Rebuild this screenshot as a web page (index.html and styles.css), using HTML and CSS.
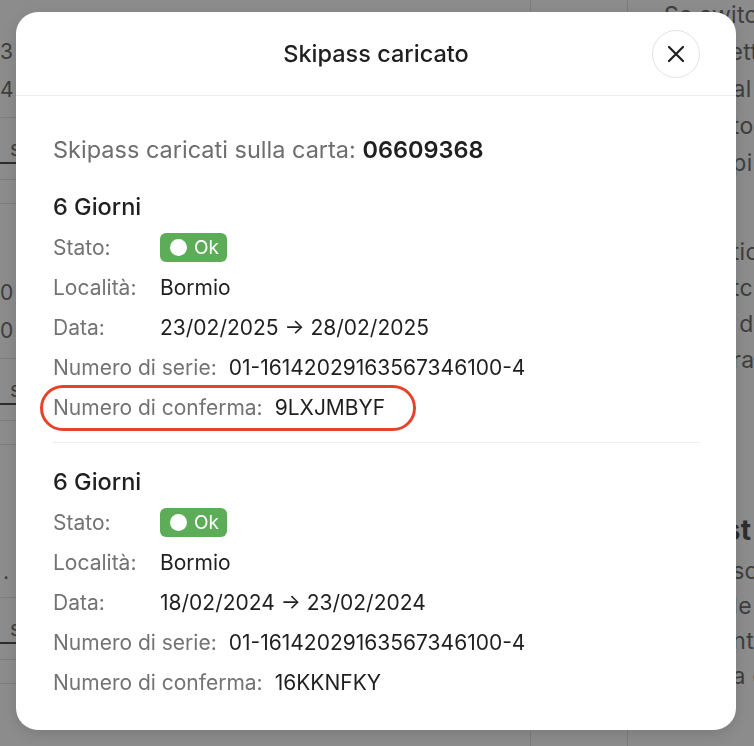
FILE: index.html
```html
<!DOCTYPE html>
<html lang="it">
<head>
<meta charset="utf-8">
<title>Skipass caricato</title>
<link rel="stylesheet" href="styles.css">
</head>
<body>
<div class="page">
  <div class="col-left">
    <div class="blk b1"><div>3</div><div>4</div></div>
    <div class="lnk"><span>s</span></div>
    <div class="gap"></div>
    <div class="blk b2"><div>0</div><div>0</div></div>
    <div class="lnk"><span>s</span></div>
    <div class="gap"></div>
    <div class="blk b3"><div>.</div></div>
    <div class="lnk"><span>s</span></div>
    <div class="gap"></div>
  </div>
  <div class="col-mid"></div>
  <div class="col-b"></div>
  <div class="col-right">
    <div class="grp g1">
      <div>Se switch</div>
      <div>Il bigliett</div>
      <div>Il contal</div>
      <div>Il contto</div>
      <div>Il contpi</div>
    </div>
    <div class="grp g2">
      <div>Il conttic</div>
      <div>Il conttc</div>
      <div>Il cont d</div>
      <div>Il contrat</div>
    </div>
    <div class="grp g3">
      <div class="hd">Assist</div>
      <div>Il contsc</div>
      <div>Il contle</div>
      <div>Il contnte</div>
      <div>Il conta c</div>
    </div>
  </div>
</div>

<div class="modal">
  <div class="modal-head">
    <h1 class="modal-title">Skipass caricato</h1>
    <button class="close" aria-label="Chiudi">
      <svg width="18" height="18" viewBox="0 0 18 18"><path d="M2 2L16 16M16 2L2 16" stroke="#1f1f1f" stroke-width="2.2" stroke-linecap="round"/></svg>
    </button>
  </div>
  <div class="modal-body">
    <p class="intro">Skipass caricati sulla carta: <strong>06609368</strong></p>

    <section class="pass">
      <h2 class="pass-title">6 Giorni</h2>
      <div class="row"><span class="lbl">Stato:</span><span class="badge"><span class="dot"></span>Ok</span></div>
      <div class="row"><span class="lbl">Località:</span><span class="val">Bormio</span></div>
      <div class="row"><span class="lbl">Data:</span><span class="val">23/02/2025 → 28/02/2025</span></div>
      <div class="row"><span class="lbl">Numero di serie:</span><span class="val">01-16142029163567346100-4</span></div>
      <div class="row mark"><span class="lbl">Numero di conferma:</span><span class="val">9LXJMBYF</span><span class="oval"></span></div>
    </section>

    <hr class="sep">

    <section class="pass">
      <h2 class="pass-title">6 Giorni</h2>
      <div class="row"><span class="lbl">Stato:</span><span class="badge"><span class="dot"></span>Ok</span></div>
      <div class="row"><span class="lbl">Località:</span><span class="val">Bormio</span></div>
      <div class="row"><span class="lbl">Data:</span><span class="val">18/02/2024 → 23/02/2024</span></div>
      <div class="row"><span class="lbl">Numero di serie:</span><span class="val">01-16142029163567346100-4</span></div>
      <div class="row"><span class="lbl">Numero di conferma:</span><span class="val">16KKNFKY</span></div>
    </section>
  </div>
</div>
</body>
</html>
```

FILE: styles.css
```css
* { box-sizing: border-box; }
html, body { margin: 0; padding: 0; }
body {
  width: 754px;
  height: 746px;
  overflow: hidden;
  background: #8c8c8c;
  font-family: Inter, "Noto Sans", sans-serif;
}

/* dimmed background page */
.page {
  display: flex;
  height: 746px;
  overflow: hidden;
  color: #3e3e3e;
}
.col-left {
  width: 16px;
  flex: none;
  font-size: 21px;
  text-align: right;
  overflow: hidden;
}
.col-left .blk { line-height: 38px; padding-right: 7px; border-bottom: 1px solid #7e7e7e; }
.col-left .b1 { padding-top: 33px; padding-bottom: 8px; }
.col-left .b2 { padding-top: 70px; padding-bottom: 8px; }
.col-left .b3 { padding-top: 108px; padding-bottom: 6px; }
.col-left .lnk {
  height: 62px;
  line-height: 62px;
  padding-right: 3px;
  border-bottom: 1px solid #7e7e7e;
}
.col-left .lnk span {
  border-bottom: 2px solid #2e2e2e;
  padding: 0 0 1px 10px;
}
.col-left .gap { height: 24px; border-bottom: 1px solid #7e7e7e; }

.col-mid { width: 515px; flex: none; border-right: 1px solid #7c7c7c; }
.col-b { width: 97px; flex: none; border-right: 1px solid #7c7c7c; }
.col-right {
  flex: 1;
  padding-left: 36px;
  font-size: 23px;
  white-space: nowrap;
  letter-spacing: 0.3px;
}
.grp div { line-height: 37px; }
.g1 { margin-top: -3px; }
.g2 { margin-top: 52px; }
.g2 div { line-height: 36px; }
.g3 { margin-top: 128px; }
.g3 div { line-height: 35px; }
.g3 .hd { font-weight: 700; font-size: 28px; line-height: 48px; color: #2e2e2e; }

/* modal */
.modal {
  position: fixed;
  left: 16px;
  top: 12px;
  width: 720px;
  height: 718px;
  background: #fff;
  border-radius: 22px;
  box-shadow: 0 4px 14px rgba(0,0,0,0.12);
  overflow: hidden;
}
.modal-head {
  height: 84px;
  border-bottom: 1px solid #ebebeb;
  display: flex;
  align-items: center;
  justify-content: center;
  position: relative;
}
.modal-title {
  margin: 0;
  font-size: 23.5px;
  font-weight: 500;
  color: #1f1f1f;
}
.close {
  position: absolute;
  right: 36px;
  top: 18px;
  width: 48px;
  height: 48px;
  border-radius: 50%;
  border: 1px solid #e2e2e2;
  background: #fff;
  display: flex;
  align-items: center;
  justify-content: center;
  padding: 0;
}
.modal-body { padding: 40px 36px 0 37px; }
.intro {
  margin: 0;
  font-size: 23.5px;
  line-height: 28px;
  color: #6e6e6e;
}
.intro strong { color: #1f1f1f; font-weight: 600; }
.pass-title {
  margin: 0 0 5px;
  font-size: 23.5px;
  font-weight: 500;
  line-height: 30px;
  color: #1f1f1f;
}
.intro + .pass { margin-top: 28px; }
.row {
  display: flex;
  align-items: center;
  gap: 12px;
  height: 40px;
  font-size: 21px;
  position: relative;
}
.lbl { color: #737373; min-width: 95px; }
.val { color: #1f1f1f; }
.badge {
  display: inline-flex;
  align-items: center;
  gap: 7px;
  height: 29px;
  padding: 0 8px 0 10px;
  background: #5dac58;
  color: #fff;
  border-radius: 6px;
  font-size: 19px;
}
.dot { width: 17px; height: 17px; border-radius: 50%; background: #fff; }
.oval {
  position: absolute;
  left: -13px;
  top: -2px;
  width: 376px;
  height: 46px;
  border: 3px solid #e5442a;
  border-radius: 23px;
  pointer-events: none;
}
.sep {
  margin: 15px 0 24px;
  border: 0;
  border-top: 1px solid #ececec;
  width: 647px;
}
```
